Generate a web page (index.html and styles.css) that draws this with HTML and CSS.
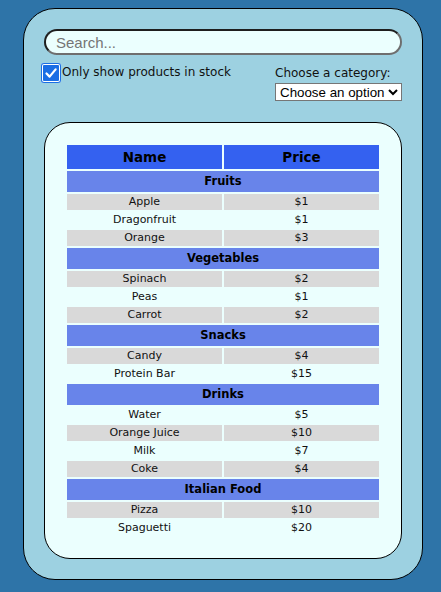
FILE: index.html
```html
<!DOCTYPE html>
<html lang="en">
<head>
<meta charset="utf-8">
<title>Products</title>
<link rel="stylesheet" href="styles.css">
</head>
<body>
<div class="app">
  <input class="search" type="text" placeholder="Search...">
  <div class="controls">
    <label class="stock">
      <span class="check"><svg viewBox="0 0 20 20" width="20" height="20"><path d="M5.5 10.5 L8.6 13.6 L14.6 6.4" fill="none" stroke="#fff" stroke-width="2.2" stroke-linecap="round" stroke-linejoin="round"/></svg></span>
      <span>Only show products in stock</span>
    </label>
    <div class="category">
      <label class="cat-label" for="cat">Choose a category:</label>
      <select id="cat" class="cat-select">
        <option>Choose an option</option>
      </select>
    </div>
  </div>
  <div class="panel">
    <table class="products">
      <thead>
        <tr><th>Name</th><th>Price</th></tr>
      </thead>
      <tbody>
        <tr class="group"><td colspan="2">Fruits</td></tr>
        <tr><td>Apple</td><td>$1</td></tr>
        <tr><td>Dragonfruit</td><td>$1</td></tr>
        <tr><td>Orange</td><td>$3</td></tr>
        <tr class="group"><td colspan="2">Vegetables</td></tr>
        <tr><td>Spinach</td><td>$2</td></tr>
        <tr><td>Peas</td><td>$1</td></tr>
        <tr><td>Carrot</td><td>$2</td></tr>
        <tr class="group"><td colspan="2">Snacks</td></tr>
        <tr><td>Candy</td><td>$4</td></tr>
        <tr><td>Protein Bar</td><td>$15</td></tr>
        <tr class="group"><td colspan="2">Drinks</td></tr>
        <tr><td>Water</td><td>$5</td></tr>
        <tr><td>Orange Juice</td><td>$10</td></tr>
        <tr><td>Milk</td><td>$7</td></tr>
        <tr><td>Coke</td><td>$4</td></tr>
        <tr class="group"><td colspan="2">Italian Food</td></tr>
        <tr><td>Pizza</td><td>$10</td></tr>
        <tr><td>Spaguetti</td><td>$20</td></tr>
      </tbody>
    </table>
  </div>
</div>
</body>
</html>
```

FILE: styles.css
```css
html, body {
  margin: 0;
  padding: 0;
}
body {
  background: #2e74a8;
  padding: 8px 0 0 23px;
  font-family: "DejaVu Sans", sans-serif;
  color: #111;
}
.app {
  box-sizing: border-box;
  width: 400px;
  background: #9dd1e1;
  border: 1px solid #000;
  border-radius: 32px;
  padding: 20px 20px 20px 20px;
}
.search {
  display: block;
  box-sizing: border-box;
  width: 100%;
  height: 26px;
  margin: 0;
  padding: 0 10px;
  border: 2px solid;
  border-color: #1e1e1e #6e6e6e #6e6e6e #1e1e1e;
  border-radius: 13px;
  background: #ebfffe;
  font: 15px "Liberation Sans", Arial, sans-serif;
  color: #111;
  outline: none;
}
.search::placeholder {
  color: #757575;
}
.controls {
  display: flex;
  justify-content: space-between;
  align-items: flex-start;
  margin-top: 7px;
}
.stock {
  display: flex;
  align-items: center;
  gap: 1px;
  margin-left: -3px;
  font-size: 12px;
  line-height: 21px;
}
.check {
  display: block;
  width: 20px;
  height: 20px;
  border-radius: 3px;
  background: #1b6ee4;
  box-shadow: inset 0 0 0 1px #1b6ee4, inset 0 0 0 2px #fff;
}
.check svg {
  display: block;
}
.category {
  display: flex;
  flex-direction: column;
  align-items: flex-start;
  padding-top: 4px;
}
.cat-label {
  font-size: 12px;
  line-height: 15px;
  margin-bottom: 2px;
}
.cat-select {
  box-sizing: border-box;
  height: 18px;
  margin: 0;
  font: 13.33px "Liberation Sans", Arial, sans-serif;
  color: #000;
  background: #fff;
  border: 1px solid #767676;
  border-radius: 0;
}
.panel {
  margin-top: 21px;
  background: #ebfffe;
  border: 1px solid #000;
  border-radius: 26px;
  padding: 20px;
}
.products {
  width: 100%;
  border-spacing: 2px;
  table-layout: fixed;
  text-align: center;
}
.products th {
  background: #3461f0;
  font-size: 13.5px;
  font-weight: bold;
  line-height: 22px;
  padding: 1px;
  color: #000;
}
.products td {
  font-size: 11px;
  line-height: 14px;
  padding: 1px;
}
.products tbody tr:nth-child(even) td {
  background: #d9d9d9;
}
.products tbody tr.group td {
  background: #6884ea;
  font-size: 11.5px;
  font-weight: bold;
  line-height: 19px;
  color: #000;
}
```
